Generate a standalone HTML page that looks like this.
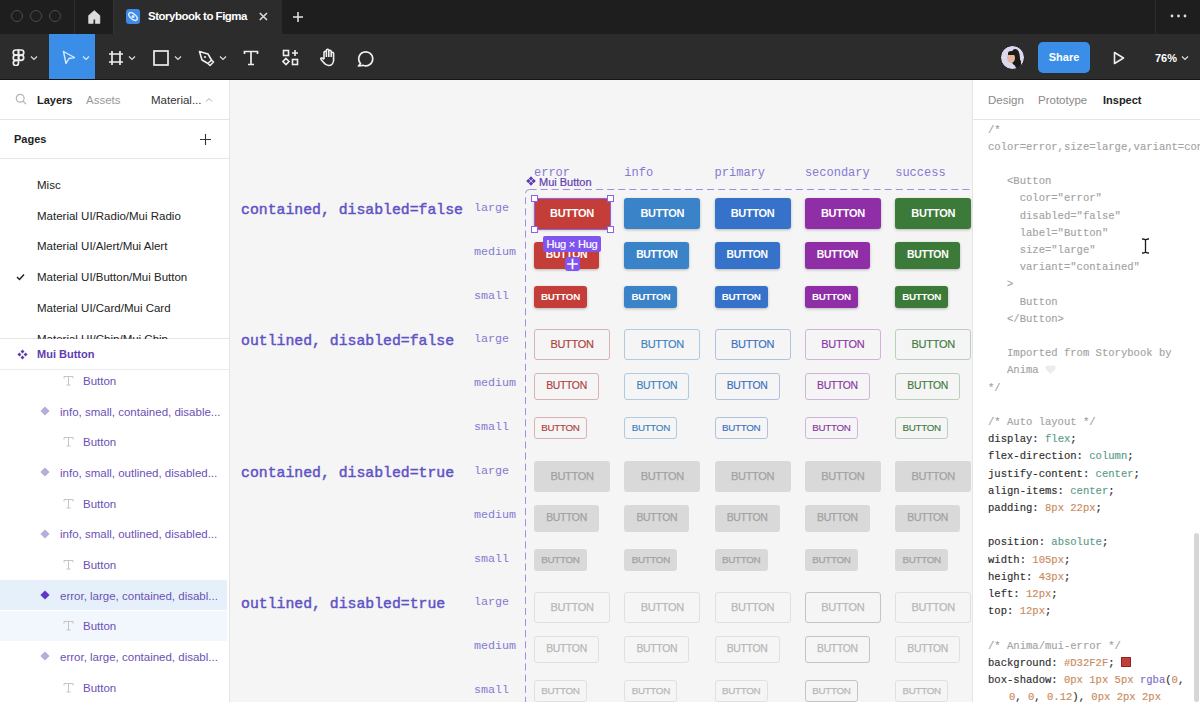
<!DOCTYPE html><html><head><meta charset="utf-8"><style>
*{margin:0;padding:0;box-sizing:border-box}
html,body{width:1200px;height:702px;overflow:hidden;background:#f5f5f5;font-family:"Liberation Sans",sans-serif}
.a{position:absolute}
.ui{position:absolute;font-size:11.5px;color:#333;white-space:nowrap;line-height:1}
.lab{position:absolute;font-family:"Liberation Mono",monospace;font-size:11.7px;color:#8579d2;white-space:nowrap;line-height:1}
.hd{position:absolute;font-family:"Liberation Mono",monospace;font-size:14.8px;font-weight:normal;color:#5f52c6;-webkit-text-stroke:.45px #5f52c6;white-space:nowrap;line-height:1}
.btn{position:absolute;display:flex;align-items:center;justify-content:center;font-weight:bold;color:#fff;border-radius:3px;white-space:nowrap;line-height:1}
.L{width:76px;height:31px;font-size:11px;letter-spacing:-.3px}
.M{width:65px;height:27px;font-size:10.4px;letter-spacing:-.3px}
.S{width:53px;height:22px;font-size:9.8px;letter-spacing:-.3px}
.c{box-shadow:0 1px 3px rgba(0,0,0,.25)}
.o{font-weight:normal;background:transparent}
.code{position:absolute;left:988px;font-family:"Liberation Mono",monospace;font-size:10.55px;color:#2e2e2e;white-space:pre;line-height:17.21px;-webkit-text-stroke:.15px #2e2e2e}
.cm{color:#a3a3a3;-webkit-text-stroke:.15px #a3a3a3}
.g{color:#5a9c89;-webkit-text-stroke:.15px #5a9c89}
.or{color:#c98b60;-webkit-text-stroke:.15px #c98b60}
.pu{color:#7d6cc6;-webkit-text-stroke:.15px #7d6cc6}
</style></head><body>
<div class="lab" style="left:534.0px;top:166.5px;font-size:12px">error</div>
<div class="lab" style="left:624.3px;top:166.5px;font-size:12px">info</div>
<div class="lab" style="left:714.6px;top:166.5px;font-size:12px">primary</div>
<div class="lab" style="left:804.9px;top:166.5px;font-size:12px">secondary</div>
<div class="lab" style="left:895.2px;top:166.5px;font-size:12px">success</div>
<svg class="a" style="left:0;top:0" width="1200" height="702"><rect x="525.5" y="189.5" width="500" height="600" rx="4" fill="none" stroke="#a68be2" stroke-width="1" stroke-dasharray="7 4.1"/></svg>
<div class="hd" style="left:241px;top:203.3px">contained, disabled=false</div>
<div class="lab" style="left:474px;top:203px">large</div>
<div class="btn L c" style="left:534.0px;top:198px;background:#c53d39">BUTTON</div>
<div class="btn L c" style="left:624.3px;top:198px;background:#3a83c9">BUTTON</div>
<div class="btn L c" style="left:714.6px;top:198px;background:#3672c9">BUTTON</div>
<div class="btn L c" style="left:804.9px;top:198px;background:#8f2ea6">BUTTON</div>
<div class="btn L c" style="left:895.2px;top:198px;background:#3c7a3a">BUTTON</div>
<div class="lab" style="left:474px;top:247px">medium</div>
<div class="btn M c" style="left:534.0px;top:242px;background:#c53d39">BUTTON</div>
<div class="btn M c" style="left:624.3px;top:242px;background:#3a83c9">BUTTON</div>
<div class="btn M c" style="left:714.6px;top:242px;background:#3672c9">BUTTON</div>
<div class="btn M c" style="left:804.9px;top:242px;background:#8f2ea6">BUTTON</div>
<div class="btn M c" style="left:895.2px;top:242px;background:#3c7a3a">BUTTON</div>
<div class="lab" style="left:474px;top:291px">small</div>
<div class="btn S c" style="left:534.0px;top:286px;background:#c53d39">BUTTON</div>
<div class="btn S c" style="left:624.3px;top:286px;background:#3a83c9">BUTTON</div>
<div class="btn S c" style="left:714.6px;top:286px;background:#3672c9">BUTTON</div>
<div class="btn S c" style="left:804.9px;top:286px;background:#8f2ea6">BUTTON</div>
<div class="btn S c" style="left:895.2px;top:286px;background:#3c7a3a">BUTTON</div>
<div class="hd" style="left:241px;top:334.3px">outlined, disabled=false</div>
<div class="lab" style="left:474px;top:334px">large</div>
<div class="btn L o" style="left:534.0px;top:329px;border:1px solid #d8b3b1;color:#b0403c;-webkit-text-stroke:.15px #b0403c">BUTTON</div>
<div class="btn L o" style="left:624.3px;top:329px;border:1px solid #aecbe2;color:#3b80c2;-webkit-text-stroke:.15px #3b80c2">BUTTON</div>
<div class="btn L o" style="left:714.6px;top:329px;border:1px solid #b0c2df;color:#3a6fc2;-webkit-text-stroke:.15px #3a6fc2">BUTTON</div>
<div class="btn L o" style="left:804.9px;top:329px;border:1px solid #d2b3db;color:#8a35a3;-webkit-text-stroke:.15px #8a35a3">BUTTON</div>
<div class="btn L o" style="left:895.2px;top:329px;border:1px solid #bccfbb;color:#3f7a3d;-webkit-text-stroke:.15px #3f7a3d">BUTTON</div>
<div class="lab" style="left:474px;top:378px">medium</div>
<div class="btn M o" style="left:534.0px;top:373px;border:1px solid #d8b3b1;color:#b0403c;-webkit-text-stroke:.15px #b0403c">BUTTON</div>
<div class="btn M o" style="left:624.3px;top:373px;border:1px solid #aecbe2;color:#3b80c2;-webkit-text-stroke:.15px #3b80c2">BUTTON</div>
<div class="btn M o" style="left:714.6px;top:373px;border:1px solid #b0c2df;color:#3a6fc2;-webkit-text-stroke:.15px #3a6fc2">BUTTON</div>
<div class="btn M o" style="left:804.9px;top:373px;border:1px solid #d2b3db;color:#8a35a3;-webkit-text-stroke:.15px #8a35a3">BUTTON</div>
<div class="btn M o" style="left:895.2px;top:373px;border:1px solid #bccfbb;color:#3f7a3d;-webkit-text-stroke:.15px #3f7a3d">BUTTON</div>
<div class="lab" style="left:474px;top:422px">small</div>
<div class="btn S o" style="left:534.0px;top:417px;border:1px solid #d8b3b1;color:#b0403c;-webkit-text-stroke:.15px #b0403c">BUTTON</div>
<div class="btn S o" style="left:624.3px;top:417px;border:1px solid #aecbe2;color:#3b80c2;-webkit-text-stroke:.15px #3b80c2">BUTTON</div>
<div class="btn S o" style="left:714.6px;top:417px;border:1px solid #b0c2df;color:#3a6fc2;-webkit-text-stroke:.15px #3a6fc2">BUTTON</div>
<div class="btn S o" style="left:804.9px;top:417px;border:1px solid #d2b3db;color:#8a35a3;-webkit-text-stroke:.15px #8a35a3">BUTTON</div>
<div class="btn S o" style="left:895.2px;top:417px;border:1px solid #bccfbb;color:#3f7a3d;-webkit-text-stroke:.15px #3f7a3d">BUTTON</div>
<div class="hd" style="left:241px;top:466.3px">contained, disabled=true</div>
<div class="lab" style="left:474px;top:466px">large</div>
<div class="btn L" style="left:534.0px;top:461px;background:#d9d9d9;color:#a2a2a2;font-weight:normal;-webkit-text-stroke:.25px #a2a2a2">BUTTON</div>
<div class="btn L" style="left:624.3px;top:461px;background:#d9d9d9;color:#a2a2a2;font-weight:normal;-webkit-text-stroke:.25px #a2a2a2">BUTTON</div>
<div class="btn L" style="left:714.6px;top:461px;background:#d9d9d9;color:#a2a2a2;font-weight:normal;-webkit-text-stroke:.25px #a2a2a2">BUTTON</div>
<div class="btn L" style="left:804.9px;top:461px;background:#d9d9d9;color:#a2a2a2;font-weight:normal;-webkit-text-stroke:.25px #a2a2a2">BUTTON</div>
<div class="btn L" style="left:895.2px;top:461px;background:#d9d9d9;color:#a2a2a2;font-weight:normal;-webkit-text-stroke:.25px #a2a2a2">BUTTON</div>
<div class="lab" style="left:474px;top:510px">medium</div>
<div class="btn M" style="left:534.0px;top:505px;background:#d9d9d9;color:#a2a2a2;font-weight:normal;-webkit-text-stroke:.25px #a2a2a2">BUTTON</div>
<div class="btn M" style="left:624.3px;top:505px;background:#d9d9d9;color:#a2a2a2;font-weight:normal;-webkit-text-stroke:.25px #a2a2a2">BUTTON</div>
<div class="btn M" style="left:714.6px;top:505px;background:#d9d9d9;color:#a2a2a2;font-weight:normal;-webkit-text-stroke:.25px #a2a2a2">BUTTON</div>
<div class="btn M" style="left:804.9px;top:505px;background:#d9d9d9;color:#a2a2a2;font-weight:normal;-webkit-text-stroke:.25px #a2a2a2">BUTTON</div>
<div class="btn M" style="left:895.2px;top:505px;background:#d9d9d9;color:#a2a2a2;font-weight:normal;-webkit-text-stroke:.25px #a2a2a2">BUTTON</div>
<div class="lab" style="left:474px;top:554px">small</div>
<div class="btn S" style="left:534.0px;top:549px;background:#d9d9d9;color:#a2a2a2;font-weight:normal;-webkit-text-stroke:.25px #a2a2a2">BUTTON</div>
<div class="btn S" style="left:624.3px;top:549px;background:#d9d9d9;color:#a2a2a2;font-weight:normal;-webkit-text-stroke:.25px #a2a2a2">BUTTON</div>
<div class="btn S" style="left:714.6px;top:549px;background:#d9d9d9;color:#a2a2a2;font-weight:normal;-webkit-text-stroke:.25px #a2a2a2">BUTTON</div>
<div class="btn S" style="left:804.9px;top:549px;background:#d9d9d9;color:#a2a2a2;font-weight:normal;-webkit-text-stroke:.25px #a2a2a2">BUTTON</div>
<div class="btn S" style="left:895.2px;top:549px;background:#d9d9d9;color:#a2a2a2;font-weight:normal;-webkit-text-stroke:.25px #a2a2a2">BUTTON</div>
<div class="hd" style="left:241px;top:597.3px">outlined, disabled=true</div>
<div class="lab" style="left:474px;top:597px">large</div>
<div class="btn L o" style="left:534.0px;top:592px;border:1px solid #e0e0e0;color:#b8b8b8;-webkit-text-stroke:.25px #b8b8b8">BUTTON</div>
<div class="btn L o" style="left:624.3px;top:592px;border:1px solid #e0e0e0;color:#b8b8b8;-webkit-text-stroke:.25px #b8b8b8">BUTTON</div>
<div class="btn L o" style="left:714.6px;top:592px;border:1px solid #e0e0e0;color:#b8b8b8;-webkit-text-stroke:.25px #b8b8b8">BUTTON</div>
<div class="btn L o" style="left:804.9px;top:592px;border:1px solid #c4c4c4;color:#b8b8b8;-webkit-text-stroke:.25px #b8b8b8">BUTTON</div>
<div class="btn L o" style="left:895.2px;top:592px;border:1px solid #e0e0e0;color:#b8b8b8;-webkit-text-stroke:.25px #b8b8b8">BUTTON</div>
<div class="lab" style="left:474px;top:641px">medium</div>
<div class="btn M o" style="left:534.0px;top:636px;border:1px solid #e0e0e0;color:#b8b8b8;-webkit-text-stroke:.25px #b8b8b8">BUTTON</div>
<div class="btn M o" style="left:624.3px;top:636px;border:1px solid #e0e0e0;color:#b8b8b8;-webkit-text-stroke:.25px #b8b8b8">BUTTON</div>
<div class="btn M o" style="left:714.6px;top:636px;border:1px solid #e0e0e0;color:#b8b8b8;-webkit-text-stroke:.25px #b8b8b8">BUTTON</div>
<div class="btn M o" style="left:804.9px;top:636px;border:1px solid #c4c4c4;color:#b8b8b8;-webkit-text-stroke:.25px #b8b8b8">BUTTON</div>
<div class="btn M o" style="left:895.2px;top:636px;border:1px solid #e0e0e0;color:#b8b8b8;-webkit-text-stroke:.25px #b8b8b8">BUTTON</div>
<div class="lab" style="left:474px;top:685px">small</div>
<div class="btn S o" style="left:534.0px;top:680px;border:1px solid #e0e0e0;color:#b8b8b8;-webkit-text-stroke:.25px #b8b8b8">BUTTON</div>
<div class="btn S o" style="left:624.3px;top:680px;border:1px solid #e0e0e0;color:#b8b8b8;-webkit-text-stroke:.25px #b8b8b8">BUTTON</div>
<div class="btn S o" style="left:714.6px;top:680px;border:1px solid #e0e0e0;color:#b8b8b8;-webkit-text-stroke:.25px #b8b8b8">BUTTON</div>
<div class="btn S o" style="left:804.9px;top:680px;border:1px solid #c4c4c4;color:#b8b8b8;-webkit-text-stroke:.25px #b8b8b8">BUTTON</div>
<div class="btn S o" style="left:895.2px;top:680px;border:1px solid #e0e0e0;color:#b8b8b8;-webkit-text-stroke:.25px #b8b8b8">BUTTON</div>
<div class="a" style="left:533.5px;top:197.5px;width:77px;height:32px;border:1px solid #8b63e8"></div>
<div class="a" style="left:531px;top:195px;width:7px;height:7px;background:#fff;border:1px solid #8b63e8"></div>
<div class="a" style="left:607px;top:195px;width:7px;height:7px;background:#fff;border:1px solid #8b63e8"></div>
<div class="a" style="left:531px;top:226px;width:7px;height:7px;background:#fff;border:1px solid #8b63e8"></div>
<div class="a" style="left:607px;top:226px;width:7px;height:7px;background:#fff;border:1px solid #8b63e8"></div>
<div class="a" style="left:543px;top:236px;width:58px;height:16px;background:#8055ef;border-radius:2px;color:#fff;font-size:11px;line-height:16px;text-align:center;white-space:nowrap;-webkit-text-stroke:.2px #fff;letter-spacing:-.2px">Hug × Hug</div>
<div class="a" style="left:565px;top:257px;width:15px;height:14px;background:#8055ef;border-radius:3px"></div>
<svg class="a" style="left:565px;top:257px" width="15" height="14"><path d="M7.5 1.8v10.4M2.2 7h10.6" stroke="#fff" stroke-width="1.7"/></svg>
<svg class="a" style="left:525.5px;top:176px" width="10" height="10" viewBox="0 0 10 10"><path d="M5 0.2L7.2 2.4 5 4.6 2.8 2.4z M2.4 2.8L4.6 5 2.4 7.2 0.2 5z M7.6 2.8L9.8 5 7.6 7.2 5.4 5z M5 5.4L7.2 7.6 5 9.8 2.8 7.6z" fill="#5e3db0"/></svg>
<div class="ui" style="left:539px;top:176.5px;color:#5e3db0;font-size:11px;-webkit-text-stroke:.2px #5e3db0">Mui Button</div>
<div class="a" style="left:0;top:80px;width:230px;height:622px;background:#fff;border-right:1px solid #e5e5e5"></div>
<div class="a" style="left:0;top:119px;width:229px;height:1px;background:#e5e5e5"></div>
<div class="a" style="left:0;top:158px;width:229px;height:1px;background:#e5e5e5"></div>
<div class="a" style="left:0;top:338px;width:229px;height:1px;background:#e5e5e5"></div>
<div class="a" style="left:0;top:369px;width:229px;height:1px;background:#ececec"></div>
<svg class="a" style="left:15px;top:93px" width="14" height="14"><circle cx="5.2" cy="5.3" r="3.9" fill="none" stroke="#b3b3b3" stroke-width="1.2"/><path d="M8 8.2l3 3" stroke="#b3b3b3" stroke-width="1.2"/></svg>
<div class="ui" style="left:37px;top:94.6px;font-weight:bold;color:#222;font-size:11px">Layers</div>
<div class="ui" style="left:86px;top:95px;color:#999">Assets</div>
<div class="ui" style="left:151px;top:95px;color:#333">Material...</div>
<svg class="a" style="left:205px;top:97px" width="8" height="6"><path d="M1 4.5L4 1.5 7 4.5" fill="none" stroke="#aaa" stroke-width="1"/></svg>
<div class="ui" style="left:14px;top:133.6px;font-weight:bold;color:#222;font-size:11px">Pages</div>
<svg class="a" style="left:199px;top:133px" width="13" height="13"><path d="M6.5 1v11M1 6.5h11" stroke="#333" stroke-width="1.1"/></svg>
<div class="ui" style="left:37px;top:180.0px;color:#222">Misc</div>
<div class="ui" style="left:37px;top:210.7px;color:#222">Material UI/Radio/Mui Radio</div>
<div class="ui" style="left:37px;top:241.4px;color:#222">Material UI/Alert/Mui Alert</div>
<div class="ui" style="left:37px;top:272.1px;color:#222">Material UI/Button/Mui Button</div>
<div class="ui" style="left:37px;top:302.8px;color:#222">Material UI/Card/Mui Card</div>
<div class="ui" style="left:37px;top:333.5px;color:#222">Material UI/Chip/Mui Chip</div>
<svg class="a" style="left:16px;top:273px" width="9" height="8"><path d="M1 4l2.5 2.5L8 1.5" fill="none" stroke="#222" stroke-width="1.5"/></svg>
<div class="a" style="left:0;top:339px;width:229px;height:30px;background:#fff"></div>
<svg class="a" style="left:17px;top:348.5px" width="11" height="11" viewBox="0 0 10 10"><path d="M5 0.4L6.8 2.2 5 4 3.2 2.2z M2.2 3.2L4 5 2.2 6.8 0.4 5z M7.8 3.2L9.6 5 7.8 6.8 6 5z M5 6L6.8 7.8 5 9.6 3.2 7.8z" fill="#5e3db0"/></svg>
<div class="ui" style="left:37px;top:348.8px;font-weight:bold;color:#5e3db0;font-size:11px">Mui Button</div>
<svg class="a" style="left:63px;top:375.0px" width="11" height="11"><path d="M1 1.5h9M5.5 1.5v8.5M3.5 10h4M1 1.5v2M10 1.5v2" fill="none" stroke="#c4c4c4" stroke-width="1"/></svg>
<div class="ui" style="left:83px;top:376.0px;color:#6c50b4">Button</div>
<svg class="a" style="left:39.8px;top:406.1px" width="10" height="10"><path d="M5 0.4L9.6 5 5 9.6 0.4 5z" fill="#b6aed8"/></svg>
<div class="ui" style="left:60px;top:406.6px;color:#6c50b4">info, small, contained, disable...</div>
<svg class="a" style="left:63px;top:436.3px" width="11" height="11"><path d="M1 1.5h9M5.5 1.5v8.5M3.5 10h4M1 1.5v2M10 1.5v2" fill="none" stroke="#c4c4c4" stroke-width="1"/></svg>
<div class="ui" style="left:83px;top:437.3px;color:#6c50b4">Button</div>
<svg class="a" style="left:39.8px;top:467.4px" width="10" height="10"><path d="M5 0.4L9.6 5 5 9.6 0.4 5z" fill="#b6aed8"/></svg>
<div class="ui" style="left:60px;top:467.9px;color:#6c50b4">info, small, outlined, disabled...</div>
<svg class="a" style="left:63px;top:497.6px" width="11" height="11"><path d="M1 1.5h9M5.5 1.5v8.5M3.5 10h4M1 1.5v2M10 1.5v2" fill="none" stroke="#c4c4c4" stroke-width="1"/></svg>
<div class="ui" style="left:83px;top:498.6px;color:#6c50b4">Button</div>
<svg class="a" style="left:39.8px;top:528.8px" width="10" height="10"><path d="M5 0.4L9.6 5 5 9.6 0.4 5z" fill="#b6aed8"/></svg>
<div class="ui" style="left:60px;top:529.2px;color:#6c50b4">info, small, outlined, disabled...</div>
<svg class="a" style="left:63px;top:558.9px" width="11" height="11"><path d="M1 1.5h9M5.5 1.5v8.5M3.5 10h4M1 1.5v2M10 1.5v2" fill="none" stroke="#c4c4c4" stroke-width="1"/></svg>
<div class="ui" style="left:83px;top:559.9px;color:#6c50b4">Button</div>
<div class="a" style="left:0;top:579.8px;width:227px;height:30.6px;background:#e6f0fb"></div>
<svg class="a" style="left:39.8px;top:590.0px" width="10" height="10"><path d="M5 0.4L9.6 5 5 9.6 0.4 5z" fill="#6236c8"/></svg>
<div class="ui" style="left:60px;top:590.5px;color:#6c50b4">error, large, contained, disabl...</div>
<div class="a" style="left:0;top:610.5px;width:227px;height:30.6px;background:#f2f7fd"></div>
<svg class="a" style="left:63px;top:620.2px" width="11" height="11"><path d="M1 1.5h9M5.5 1.5v8.5M3.5 10h4M1 1.5v2M10 1.5v2" fill="none" stroke="#c4c4c4" stroke-width="1"/></svg>
<div class="ui" style="left:83px;top:621.2px;color:#6c50b4">Button</div>
<svg class="a" style="left:39.8px;top:651.3px" width="10" height="10"><path d="M5 0.4L9.6 5 5 9.6 0.4 5z" fill="#b6aed8"/></svg>
<div class="ui" style="left:60px;top:651.8px;color:#6c50b4">error, large, contained, disabl...</div>
<svg class="a" style="left:63px;top:681.5px" width="11" height="11"><path d="M1 1.5h9M5.5 1.5v8.5M3.5 10h4M1 1.5v2M10 1.5v2" fill="none" stroke="#c4c4c4" stroke-width="1"/></svg>
<div class="ui" style="left:83px;top:682.5px;color:#6c50b4">Button</div>
<div class="a" style="left:972px;top:80px;width:228px;height:622px;background:#fff;border-left:1px solid #e5e5e5"></div>
<div class="a" style="left:973px;top:119px;width:227px;height:1px;background:#e5e5e5"></div>
<div class="ui" style="left:988px;top:95px;color:#888">Design</div>
<div class="ui" style="left:1038px;top:95px;color:#888">Prototype</div>
<div class="ui" style="left:1103px;top:94.6px;font-weight:bold;color:#222;font-size:11px">Inspect</div>
<div class="code" style="top:121.6px;overflow:hidden;width:212px;height:580px"><span class="cm">/*</span>
<span class="cm">color=error,size=large,variant=contained</span>

<span class="cm">   &lt;Button</span>
<span class="cm">     color="error"</span>
<span class="cm">     disabled="false"</span>
<span class="cm">     label="Button"</span>
<span class="cm">     size="large"</span>
<span class="cm">     variant="contained"</span>
<span class="cm">   &gt;</span>
<span class="cm">     Button</span>
<span class="cm">   &lt;/Button&gt;</span>

<span class="cm">   Imported from Storybook by</span>
<span class="cm">   Anima </span><svg width="11" height="9" style="vertical-align:-1px"><path d="M5.5 9L1 4.5A2.4 2.4 0 0 1 5.5 1.5 2.4 2.4 0 0 1 10 4.5z" fill="#ececec"/></svg>
<span class="cm">*/</span>

<span class="cm">/* Auto layout */</span>
display: <span class="g">flex</span>;
flex-direction: <span class="g">column</span>;
justify-content: <span class="g">center</span>;
align-items: <span class="g">center</span>;
padding: <span class="or">8px 22px</span>;

position: <span class="g">absolute</span>;
width: <span class="or">105px</span>;
height: <span class="or">43px</span>;
left: <span class="or">12px</span>;
top: <span class="or">12px</span>;

<span class="cm">/* Anima/mui-error */</span>
background: <span class="or">#D32F2F</span>; <span style="display:inline-block;width:10px;height:10px;background:#c53d39;border:1px solid #8a2a28;vertical-align:-1px"></span>
box-shadow: <span class="or">0px 1px 5px</span> <span class="pu">rgba</span>(<span class="or">0</span>,
   <span style="margin-left:2px"></span><span class="or">0</span>, <span class="or">0</span>, <span class="or">0.12</span>), <span class="or">0px 2px 2px</span></div>
<div class="a" style="left:1194px;top:533px;width:5px;height:169px;background:#d6d6d6;border-radius:3px"></div>
<svg class="a" style="left:1141px;top:237.5px" width="9" height="16"><path d="M1 1Q4.5 0.8 4.5 2.6Q4.5 0.8 8 1M4.5 2.6V13.4M1 15Q4.5 15.2 4.5 13.4Q4.5 15.2 8 15" fill="none" stroke="#1a1a1a" stroke-width="1.3"/></svg>
<div class="a" style="left:0;top:0;width:1200px;height:34px;background:#1e1e1e"></div>
<div class="a" style="left:11px;top:10px;width:12px;height:12px;border-radius:50%;border:1px solid #4a4a4a"></div>
<div class="a" style="left:30px;top:10px;width:12px;height:12px;border-radius:50%;border:1px solid #4a4a4a"></div>
<div class="a" style="left:49px;top:10px;width:12px;height:12px;border-radius:50%;border:1px solid #4a4a4a"></div>
<div class="a" style="left:74px;top:0;width:1px;height:34px;background:#2e2e2e"></div>
<svg class="a" style="left:88px;top:10px" width="13" height="14"><path d="M6.25 0.6L0.6 5.6V13.4H5.2V9.2H7.3V13.4H11.9V5.6z" fill="#dcdcdc" stroke="#dcdcdc" stroke-width="0.6" stroke-linejoin="round"/></svg>
<div class="a" style="left:114px;top:0;width:168px;height:34px;background:#2c2c2c"></div>
<div class="a" style="left:113px;top:0;width:1px;height:34px;background:#333"></div>
<div class="a" style="left:126px;top:9px;width:14px;height:15px;background:#3f8ae6;border-radius:3px"></div>
<svg class="a" style="left:126px;top:9px" width="14" height="15"><ellipse cx="7" cy="7.5" rx="5" ry="2.6" transform="rotate(40 7 7.5)" fill="none" stroke="#d8ecff" stroke-width="1.5"/><circle cx="7" cy="7.5" r="1.5" fill="#d8ecff"/></svg>
<div class="ui" style="left:148px;top:10px;color:#fff;font-size:11.5px;font-weight:bold;letter-spacing:-.5px;top:11px">Storybook to Figma</div>
<svg class="a" style="left:258px;top:11px" width="11" height="11"><path d="M1.8 2l7.2 7M9 2L1.8 9" stroke="#d8d8d8" stroke-width="1.7"/></svg>
<svg class="a" style="left:292px;top:11px" width="12" height="12"><path d="M6 1v10M1 6h10" stroke="#e5e5e5" stroke-width="1.5"/></svg>
<div class="a" style="left:1155px;top:0;width:1px;height:34px;background:#2e2e2e"></div>
<svg class="a" style="left:1170px;top:14px" width="18" height="4"><circle cx="2" cy="2" r="1.4" fill="#ddd"/><circle cx="8.5" cy="2" r="1.4" fill="#ddd"/><circle cx="15" cy="2" r="1.4" fill="#ddd"/></svg>
<div class="a" style="left:0;top:34px;width:1200px;height:46px;background:#2c2c2c"></div>
<div class="a" style="left:49px;top:34px;width:46px;height:46px;background:#3b8ee8"></div>
<div class="a" style="left:0;top:79px;width:1200px;height:1px;background:#161616"></div>
<svg class="a" style="left:12px;top:49px" width="13" height="17" viewBox="0 0 13 17"><g fill="none" stroke="#eee" stroke-width="1.7"><path d="M6.5 1H3.8a2.6 2.6 0 0 0 0 5.2h2.7z"/><path d="M6.5 1h2.7a2.6 2.6 0 0 1 0 5.2H6.5z"/><path d="M6.5 6.2H3.8a2.6 2.6 0 0 0 0 5.2h2.7z"/><circle cx="9.1" cy="8.8" r="2.6"/><path d="M6.5 11.4H3.8a2.6 2.6 0 1 0 2.7 2.6z"/></g></svg>
<svg class="a" style="left:30px;top:55px" width="8" height="6"><path d="M1 1.5l3 3 3-3" fill="none" stroke="#ddd" stroke-width="1.2"/></svg>
<svg class="a" style="left:62px;top:50px" width="14" height="15"><path d="M1.5 1.5L12.5 7.5 7 8.5 4 13.5z" fill="none" stroke="#d6ebff" stroke-width="1.4" stroke-linejoin="round"/></svg>
<svg class="a" style="left:82px;top:55px" width="8" height="6"><path d="M1 1.5l3 3 3-3" fill="none" stroke="#d6ebff" stroke-width="1.2"/></svg>
<svg class="a" style="left:108px;top:50px" width="16" height="16"><path d="M4 1v14M12 1v14M1 4h14M1 12h14" stroke="#eee" stroke-width="1.7"/></svg>
<svg class="a" style="left:128px;top:55px" width="8" height="6"><path d="M1 1.5l3 3 3-3" fill="none" stroke="#ddd" stroke-width="1.2"/></svg>
<svg class="a" style="left:153px;top:50px" width="16" height="16"><rect x="1" y="1" width="14" height="14" fill="none" stroke="#eee" stroke-width="1.7"/></svg>
<svg class="a" style="left:174px;top:55px" width="8" height="6"><path d="M1 1.5l3 3 3-3" fill="none" stroke="#ddd" stroke-width="1.2"/></svg>
<svg class="a" style="left:198px;top:50px" width="17" height="17"><path d="M1.5 1.5L10 4l3.5 6-3.5 3.5-6-3.5z M13.5 10l2 2-3.5 3.5-2-2" fill="none" stroke="#eee" stroke-width="1.6" stroke-linejoin="round"/><circle cx="7" cy="7" r="1.1" fill="#eee"/></svg>
<svg class="a" style="left:219px;top:55px" width="8" height="6"><path d="M1 1.5l3 3 3-3" fill="none" stroke="#ddd" stroke-width="1.2"/></svg>
<svg class="a" style="left:243px;top:50px" width="16" height="16"><path d="M1.5 4V1.5h13V4M8 1.5v13M5 14.5h6" fill="none" stroke="#eee" stroke-width="1.7"/></svg>
<svg class="a" style="left:282px;top:49px" width="17" height="17"><rect x="1.5" y="1.5" width="5" height="5" fill="none" stroke="#eee" stroke-width="1.6"/><rect x="10.5" y="10.5" width="5" height="5" fill="none" stroke="#eee" stroke-width="1.6"/><path d="M13 1v6M10 4h6" stroke="#eee" stroke-width="1.6"/><path d="M4 9.5l3 3-3 3-3-3z" fill="none" stroke="#eee" stroke-width="1.6"/></svg>
<svg class="a" style="left:319px;top:48px" width="18" height="19"><path d="M5 11V4.5a1.2 1.2 0 0 1 2.4 0V9 M7.4 9V2.5a1.2 1.2 0 0 1 2.4 0V9 M9.8 9V3.5a1.2 1.2 0 0 1 2.4 0V9 M12.2 9V5.5a1.2 1.2 0 0 1 2.4 0V12c0 3-2 5.5-5 5.5-2.5 0-3.5-1-5-3L2 11.5c-.7-1 .5-2 1.4-1.3L5 11.5" fill="none" stroke="#eee" stroke-width="1.6" stroke-linejoin="round"/></svg>
<svg class="a" style="left:357px;top:49px" width="18" height="18"><path d="M3.5 14.5A7 7 0 1 1 6 16.3L1.5 17z" fill="none" stroke="#eee" stroke-width="1.7" stroke-linejoin="round"/></svg>
<div class="a" style="left:1000px;top:45px;width:25px;height:25px;border-radius:50%;background:#dcd8f0;border:1.6px solid #121212;overflow:hidden"><div style="position:absolute;left:10px;top:3px;width:9px;height:17px;border-radius:45% 55% 40% 60%;background:#1f1a1a"></div><div style="position:absolute;left:14px;top:13px;width:6px;height:9px;border-radius:40%;background:#1f1a1a"></div><div style="position:absolute;left:6px;top:7px;width:8px;height:10px;border-radius:50%;background:#e3b89e"></div><div style="position:absolute;left:7px;top:5px;width:7px;height:4px;border-radius:50% 50% 0 0;background:#1f1a1a"></div></div>
<div class="a" style="left:1038px;top:42px;width:52px;height:31px;background:#3b8ee8;border-radius:5px;color:#fff;font-size:11px;font-weight:bold;line-height:31px;text-align:center">Share</div>
<svg class="a" style="left:1113px;top:51px" width="12" height="14"><path d="M1.5 1.5L10.5 7 1.5 12.5z" fill="none" stroke="#eee" stroke-width="1.6" stroke-linejoin="round"/></svg>
<div class="ui" style="left:1155px;top:52.5px;color:#fff;font-size:11px;font-weight:bold">76%</div>
<svg class="a" style="left:1181px;top:55px" width="8" height="6"><path d="M1 1.5l3 3 3-3" fill="none" stroke="#ddd" stroke-width="1.2"/></svg>
</body></html>
